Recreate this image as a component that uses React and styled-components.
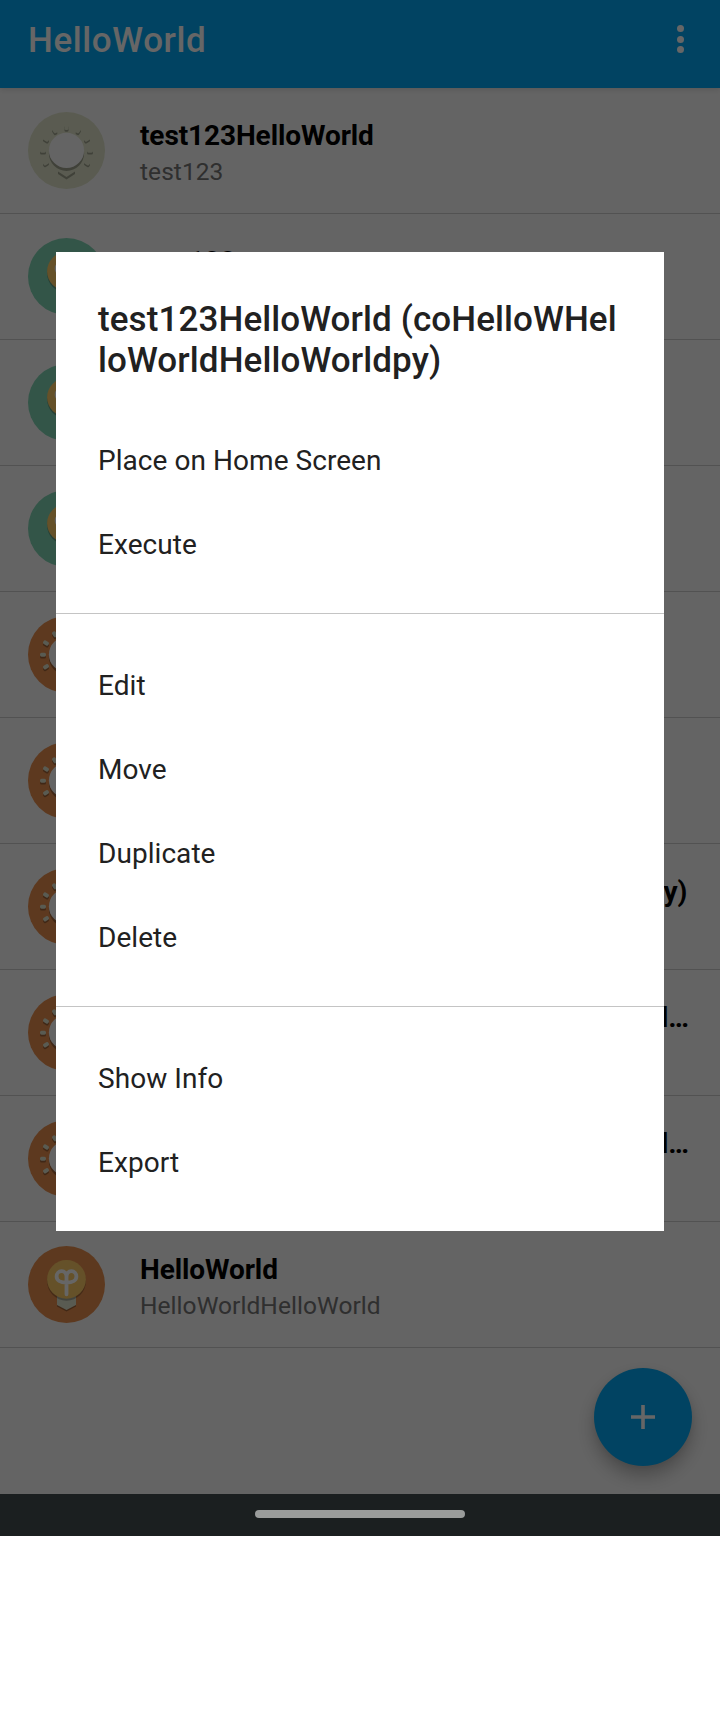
import React from 'react';
import styled, { createGlobalStyle } from 'styled-components';

const GlobalStyle = createGlobalStyle`
  * { box-sizing: border-box; }
  body { margin: 0; background: #fff; font-family: Roboto, "Liberation Sans", sans-serif; }
`;

const Screen = styled.div`
  position: relative;
  display: flex;
  flex-direction: column;
  width: 720px;
  height: 1536px;
  overflow: hidden;
  background: #fafafa;
`;

const AppBar = styled.header`
  display: flex;
  flex: none;
  align-items: center;
  justify-content: space-between;
  height: 88px;
  padding: 0 28px 8px;
  background: #03a9f4;
  color: #fff;
  box-shadow: 0 1px 6px rgba(0, 0, 0, 0.15);
  z-index: 1;
`;

const AppTitle = styled.h1`
  margin: 0;
  font-size: 35px;
  font-weight: 500;
  line-height: 41px;
  letter-spacing: 0.6px;
`;

const Overflow = styled.div`
  display: flex;
  flex-direction: column;
  gap: 3.6px;
  padding: 0 8px 0 0;
  margin-top: -2px;
`;

const Dot = styled.span`
  width: 7px;
  height: 7px;
  border-radius: 50%;
  background: #fff;
`;

const List = styled.main`
  flex: 1;
`;

const Row = styled.div`
  display: flex;
  height: 126px;
  padding: 24px 28px 0;
  border-bottom: 1px solid #cecece;
`;

const Avatar = styled.svg`
  flex: none;
  width: 77px;
  height: 77px;
`;

const RowText = styled.div`
  flex: 1;
  min-width: 0;
  margin-left: 35px;
  padding-top: 6.5px;
  white-space: nowrap;
`;

const RowTitle = styled.div`
  font-size: 28px;
  font-weight: 700;
  line-height: 33px;
  letter-spacing: ${(p) => p.$tracking ?? -0.1}px;
  color: #000;
`;

const RowSubtitle = styled.div`
  margin-top: 5px;
  font-size: 24.5px;
  line-height: 29px;
  letter-spacing: 0.06px;
  color: #757575;
`;

const Fab = styled.button`
  position: absolute;
  right: 28px;
  bottom: 70px;
  display: flex;
  align-items: center;
  justify-content: center;
  width: 98px;
  height: 98px;
  padding: 0;
  border: 0;
  border-radius: 50%;
  background: #03a9f4;
  box-shadow: 0 10px 18px rgba(0, 0, 0, 0.26), 0 2px 6px rgba(0, 0, 0, 0.06);
`;

const NavBar = styled.footer`
  display: flex;
  flex: none;
  align-items: flex-start;
  justify-content: center;
  height: 42px;
  padding-top: 16px;
  background: #1b1f20;
  z-index: 3;
`;

const NavPill = styled.div`
  width: 210px;
  height: 8px;
  border-radius: 4px;
  background: #9a9c9b;
`;

const Scrim = styled.div`
  position: absolute;
  inset: 0;
  z-index: 2;
  padding: 252px 56px 0;
  background: rgba(0, 0, 0, 0.6);
`;

const Dialog = styled.section`
  height: 979px;
  background: #fff;
  color: #212121;
`;

const DialogTitle = styled.h2`
  margin: 0;
  padding: 47px 0 0 42px;
  height: 166px;
  font-size: 35px;
  font-weight: 500;
  line-height: 41px;
  letter-spacing: 0.1px;
  white-space: nowrap;
`;

const MenuGroup = styled.div`
  padding: ${(p) => (p.$first ? '0 0 27px' : '29px 0 27px')};
  border-bottom: ${(p) => (p.$last ? '0' : '1px solid #c4c4c4')};
`;

const MenuItem = styled.div`
  display: flex;
  align-items: center;
  height: 84px;
  padding-left: 42px;
  font-size: 28px;
  letter-spacing: 0.05px;
`;

const RAYS = [
  [38.5, 15, 90], [26.7, 18.3, 58], [50.3, 18.3, -58],
  [18, 27, 30], [59, 27, -30], [15, 38.7, 0], [62, 38.7, 0],
  [18, 50.7, -30], [59, 50.7, 30],
];

function Rays({ fill, dy = 0 }) {
  return RAYS.map(([x, y, a]) => (
    <rect key={`${x}-${y}`} x={x - 3} y={y + dy - 2} width="6" height="4" rx="1.6"
      fill={fill} transform={`rotate(${a} ${x} ${y + dy})`} />
  ));
}

function GlowIcon({ bg, part, shade }) {
  return (
    <Avatar viewBox="0 0 77 77">
      <circle cx="38.5" cy="38.5" r="38.5" fill={bg} />
      <Rays fill={shade} dy={1.8} />
      <Rays fill={part} />
      <path d="M30 56V62L38.5 67.5L47 62V56Z" fill={shade} />
      <path d="M30 54V59.5L38.5 65L47 59.5V54Z" fill={part} />
      <circle cx="38.5" cy="41.3" r="17.6" fill={shade} />
      <circle cx="38.5" cy="38.4" r="17.6" fill="#fafafa" />
    </Avatar>
  );
}

function BulbIcon({ bg, bulb, shade }) {
  return (
    <Avatar viewBox="0 0 77 77">
      <circle cx="38.5" cy="38.5" r="38.5" fill={bg} />
      <path d="M29 48V60.5L38.5 65.5L48 60.5V48Z" fill={shade} />
      <path d="M29 48V59L38.5 64L48 59V48Z" fill="#dfe3cd" />
      <circle cx="38.5" cy="35.3" r="19.4" fill="#000" fillOpacity="0.26" />
      <circle cx="38.5" cy="33.4" r="19.4" fill={bulb} />
      <path d="M38.5 48.3V31C38.5 27.5 36.5 25.2 33.6 25.2C30.7 25.2 28.6 27.6 28.6 30.4C28.6 34 32.2 36.7 38.5 36.7C44.8 36.7 48.4 34 48.4 30.4C48.4 27.6 46.3 25.2 43.4 25.2C40.5 25.2 38.5 27.5 38.5 31"
        fill="none" stroke="#fff" strokeWidth="3.8" strokeLinecap="round" />
    </Avatar>
  );
}

const ICONS = {
  grey: <GlowIcon bg="#e0e4ca" part="#e0e4ca" shade="#a0a38f" />,
  green: <BulbIcon bg="#80d4b4" bulb="#fdcb67" shade="#5a967f" />,
  glow: <GlowIcon bg="#e88f4e" part="#dfe3cd" shade="#a06337" />,
  bulb: <BulbIcon bg="#e88f4e" bulb="#fdcb67" shade="#a06337" />,
};

const ROWS = [
  { icon: 'grey', title: 'test123HelloWorld', sub: 'test123' },
  { icon: 'green', title: 'test123' },
  { icon: 'green' },
  { icon: 'green' },
  { icon: 'glow' },
  { icon: 'glow' },
  { icon: 'glow', title: 'test123HelloWorld (HelloWorldHelloWcopy)', tracking: -0.08 },
  { icon: 'glow', title: 'test123HelloWorld (coHelloWHelWorldHel…', tracking: -0.06 },
  { icon: 'glow', title: 'test123HelloWorld (coHelloWHelWorldHel…', tracking: -0.06 },
  { icon: 'bulb', title: 'HelloWorld', sub: 'HelloWorldHelloWorld' },
];

const GROUPS = [
  ['Place on Home Screen', 'Execute'],
  ['Edit', 'Move', 'Duplicate', 'Delete'],
  ['Show Info', 'Export'],
];

export default function App() {
  return (
    <>
      <GlobalStyle />
      <Screen>
        <AppBar>
          <AppTitle>HelloWorld</AppTitle>
          <Overflow><Dot /><Dot /><Dot /></Overflow>
        </AppBar>
        <List>
          {ROWS.map((r, i) => (
            <Row key={i}>
              {ICONS[r.icon]}
              <RowText>
                <RowTitle $tracking={r.tracking}>{r.title}</RowTitle>
                <RowSubtitle>{r.sub}</RowSubtitle>
              </RowText>
            </Row>
          ))}
        </List>
        <Fab aria-label="Add">
          <svg width="24" height="24" viewBox="0 0 24 24">
            <path d="M12 0V24M0 12H24" stroke="#fff" strokeWidth="3.6" />
          </svg>
        </Fab>
        <Scrim>
          <Dialog>
            <DialogTitle>test123HelloWorld (coHelloWHel<br />loWorldHelloWorldpy)</DialogTitle>
            {GROUPS.map((items, i) => (
              <MenuGroup key={i} $first={i === 0} $last={i === GROUPS.length - 1}>
                {items.map((label) => <MenuItem key={label}>{label}</MenuItem>)}
              </MenuGroup>
            ))}
          </Dialog>
        </Scrim>
        <NavBar><NavPill /></NavBar>
      </Screen>
    </>
  );
}
